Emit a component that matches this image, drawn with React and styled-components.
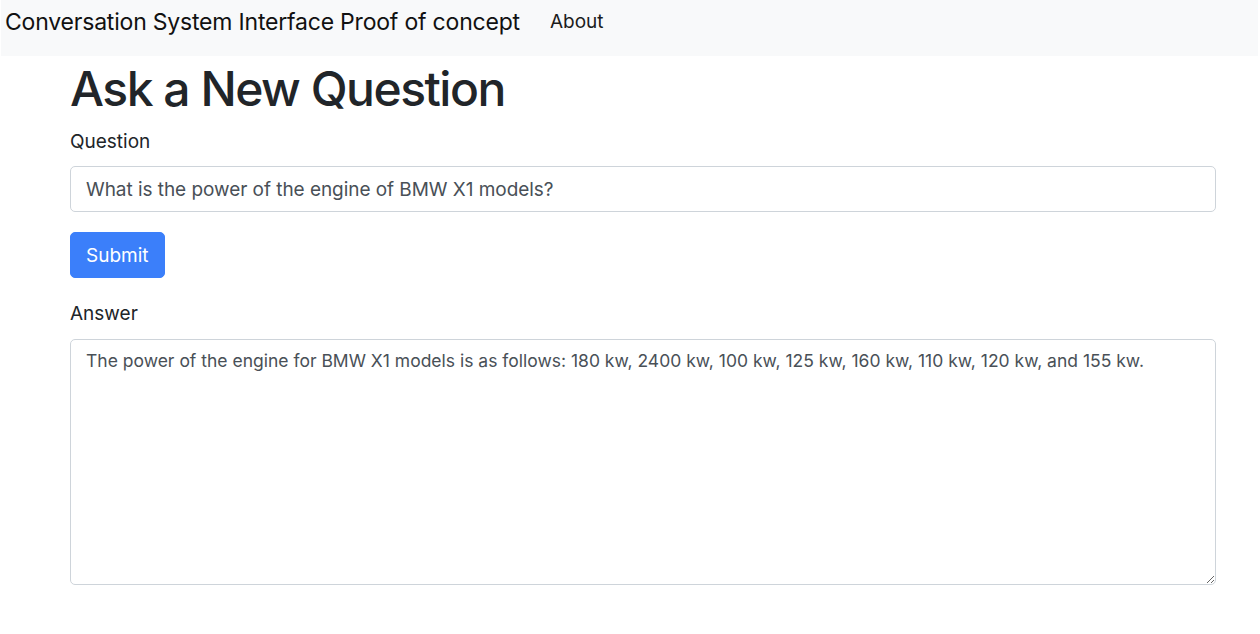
import React from "react";
import styled, { createGlobalStyle } from "styled-components";

const GlobalStyle = createGlobalStyle`
  * {
    box-sizing: border-box;
  }
  body {
    margin: 0;
    background: #fff;
    color: #212529;
    font-family: Inter, "Liberation Sans", sans-serif;
    font-size: 19px;
    line-height: 1.5;
  }
`;

const Navbar = styled.nav`
  display: flex;
  align-items: flex-start;
  height: 56px;
  margin: 0 2px 0 1px;
  padding: 5px 4px 0;
  background: #f8f9fa;
`;

const Brand = styled.a`
  font-size: 23px;
  line-height: 34px;
  color: #111;
  margin-right: 20px;
  white-space: nowrap;
  letter-spacing: -0.2px;
`;

const NavLink = styled.a`
  font-size: 19px;
  line-height: 28px;
  margin-top: 3px;
  color: #1c1c1c;
  padding: 0 10px;
`;

const Container = styled.main`
  width: 1146px;
  margin: 0 0 0 70px;
  padding-top: 4px;
`;

const Title = styled.h1`
  margin: 0 0 10px;
  font-size: 48px;
  font-weight: 500;
  line-height: 1.2;
  letter-spacing: -1.5px;
`;

const Group = styled.div`
  margin-bottom: ${(p) => p.$gap || 20}px;
`;

const Label = styled.label`
  display: block;
  margin-bottom: 10px;
  font-size: 19px;
`;

const fieldStyles = `
  display: block;
  width: 100%;
  padding: 7px 15px;
  font-family: Inter, "Liberation Sans", sans-serif;
  line-height: 1.5;
  color: #495057;
  background: #fff;
  border: 1px solid #ced4da;
  border-radius: 5px;
  outline: none;
`;

const Input = styled.input`
  ${fieldStyles}
  height: 46px;
  font-size: 19px;
  letter-spacing: -0.05px;
`;

const TextArea = styled.textarea`
  ${fieldStyles}
  height: 246px;
  padding-top: 8px;
  font-size: 17.5px;
  resize: vertical;
`;

const SubmitButton = styled.button`
  height: 46px;
  padding: 0 15px;
  font-family: Inter, "Liberation Sans", sans-serif;
  font-size: 19px;
  color: #fff;
  background: #3b7ffa;
  border: 1px solid #3b7ffa;
  border-radius: 5px;
  cursor: pointer;
`;

const App = () => {
  return (
    <>
      <GlobalStyle />
      <Navbar>
        <Brand>Conversation System Interface Proof of concept</Brand>
        <NavLink>About</NavLink>
      </Navbar>
      <Container>
        <Title>Ask a New Question</Title>
        <Group>
          <Label htmlFor="question">Question</Label>
          <Input
            id="question"
            defaultValue="What is the power of the engine of BMW X1 models?"
          />
        </Group>
        <Group $gap={22}>
          <SubmitButton>Submit</SubmitButton>
        </Group>
        <Group>
          <Label htmlFor="answer">Answer</Label>
          <TextArea
            id="answer"
            defaultValue="The power of the engine for BMW X1 models is as follows: 180 kw, 2400 kw, 100 kw, 125 kw, 160 kw, 110 kw, 120 kw, and 155 kw."
          />
        </Group>
      </Container>
    </>
  );
};

export default App;
